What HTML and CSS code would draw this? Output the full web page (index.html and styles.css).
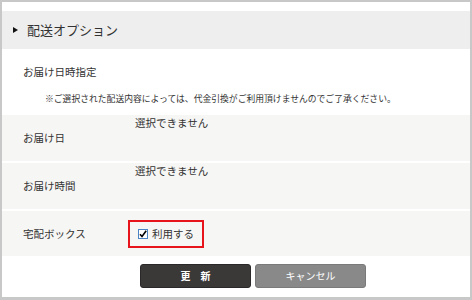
FILE: index.html
```html
<!DOCTYPE html>
<html lang="ja">
<head>
<meta charset="utf-8">
<link rel="stylesheet" href="styles.css">
</head>
<body>
<div class="frame">
  <div class="head"><span class="tri"></span><h1 class="head-title">配送オプション</h1></div>
  <div class="intro">
    <p class="title">お届け日時指定</p>
    <p class="note">※ご選択された配送内容によっては、代金引換がご利用頂けませんのでご了承ください。</p>
  </div>
  <div class="rows">
    <div class="row"><div class="label">お届け日</div><div class="value">選択できません</div></div>
    <div class="row"><div class="label">お届け時間</div><div class="value">選択できません</div></div>
    <div class="row row-last"><div class="label">宅配ボックス</div>
      <div class="value value-center">
        <label class="box"><span class="cb"><svg width="8" height="8" viewBox="0 0 8 8"><path d="M1 4.2 L3 6.5 L7.2 0.8" fill="none" stroke="#000" stroke-width="1.6"/></svg></span>利用する</label>
      </div>
    </div>
  </div>
  <div class="actions">
    <button class="btn primary">更　新</button>
    <button class="btn secondary">キャンセル</button>
  </div>
</div>
</body>
</html>
```
FILE: styles.css
```css
* { box-sizing: border-box; }
html, body { margin: 0; padding: 0; background: #fff; }
body { font-family: "Noto Sans CJK JP", "Noto Sans", sans-serif; color: #333; }
.frame {
  width: 472px; height: 300px;
  border: 2px solid #c8c8c8;
  border-bottom-width: 3px;
  padding-top: 9px;
  background: #fff;
}
.head {
  height: 38px; background: #eeeeee;
  display: flex; align-items: center;
  padding-left: 11px;
}
.tri {
  width: 0; height: 0;
  border-left: 5px solid #111;
  border-top: 3px solid transparent;
  border-bottom: 3px solid transparent;
  margin-right: 9px;
}
.head-title { margin: 0; font-size: 13px; font-weight: normal; line-height: 16px; color: #333; }
.intro { padding: 16px 0 10px 21px; }
.title { margin: 0; font-size: 10.5px; line-height: 14px; }
.note { margin: 14px 0 0 22px; font-size: 8.8px; line-height: 12px; white-space: nowrap; }
.rows { display: grid; gap: 2px; }
.row {
  height: 46px; background: #f6f6f4;
  display: grid; grid-template-columns: 112px 1fr;
  padding-left: 21px;
  font-size: 10.5px;
}
.row-last { height: 45px; }
.label { align-self: center; line-height: 14px; }
.value { align-self: start; padding-top: 1px; line-height: 14px; }
.value-center { align-self: center; padding-top: 0; }
.box {
  display: inline-flex; align-items: center;
  height: 28px; margin-left: -7px;
  border: 2px solid #e8141c;
  padding: 0 8px;
  gap: 4px;
}
.cb {
  width: 10px; height: 10px;
  border: 1px solid #4a84c4;
  background: #fff;
  display: flex; align-items: center; justify-content: center;
}
.cb svg { display: block; }
.actions { display: flex; gap: 4px; padding: 8px 0 0 138px; }
.btn {
  width: 111px; height: 24px;
  border-radius: 3px;
  font-family: inherit; font-size: 10px;
  color: #fff; padding: 0;
  line-height: 22px;
}
.primary { background: #3b3838; border: 1px solid #2a2828; font-weight: bold; }
.secondary { background: #898989; border: 1px solid #7a7a7a; }
```
